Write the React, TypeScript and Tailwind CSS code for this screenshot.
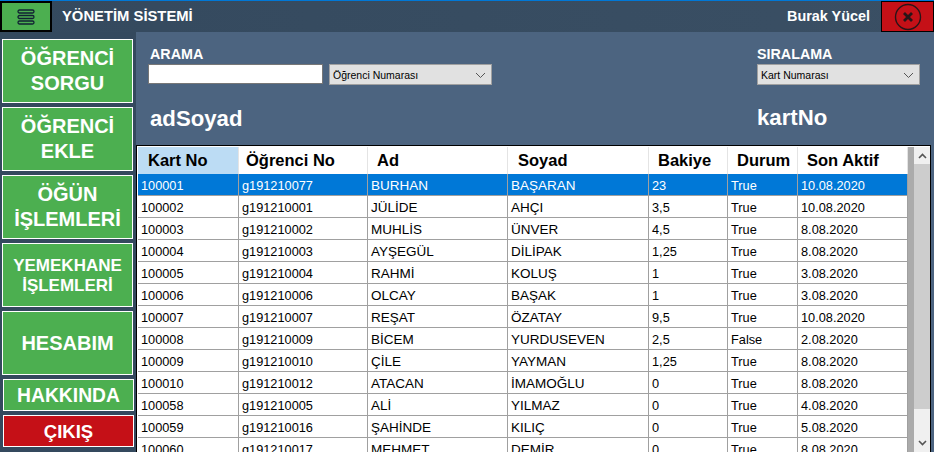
import React from "react";

const rows = [
  ["100001", "g191210077", "BURHAN", "BAŞARAN", "23", "True", "10.08.2020"],
  ["100002", "g191210001", "JÜLİDE", "AHÇI", "3,5", "True", "10.08.2020"],
  ["100003", "g191210002", "MUHLİS", "ÜNVER", "4,5", "True", "8.08.2020"],
  ["100004", "g191210003", "AYŞEGÜL", "DİLİPAK", "1,25", "True", "8.08.2020"],
  ["100005", "g191210004", "RAHMİ", "KOLUŞ", "1", "True", "3.08.2020"],
  ["100006", "g191210006", "OLCAY", "BAŞAK", "1", "True", "3.08.2020"],
  ["100007", "g191210007", "REŞAT", "ÖZATAY", "9,5", "True", "10.08.2020"],
  ["100008", "g191210009", "BİCEM", "YURDUSEVEN", "2,5", "False", "2.08.2020"],
  ["100009", "g191210010", "ÇİLE", "YAYMAN", "1,25", "True", "8.08.2020"],
  ["100010", "g191210012", "ATACAN", "İMAMOĞLU", "0", "True", "8.08.2020"],
  ["100058", "g191210005", "ALİ", "YILMAZ", "0", "True", "4.08.2020"],
  ["100059", "g191210016", "ŞAHİNDE", "KILIÇ", "0", "True", "5.08.2020"],
  ["100060", "g191210017", "MEHMET", "DEMİR", "0", "True", "8.08.2020"],
];

const heads = [
  ["Kart No", "pl-[10px] bg-[#bcdcf4]"],
  ["Öğrenci No", "pl-[7px]"],
  ["Ad", "pl-[9px]"],
  ["Soyad", "pl-[10px]"],
  ["Bakiye", "pl-[9px]"],
  ["Durum", "pl-[9px]"],
  ["Son Aktif", "pl-[9px]"],
];

const gridCols = "grid grid-cols-[101px_129px_140px_141px_79px_70px_110px]";

function SideButton({ children, className }: { children: React.ReactNode; className: string }) {
  return (
    <button className={`flex w-[131px] items-center justify-center border border-white text-center font-bold ${className}`}>
      <span className="text-white">{children}</span>
    </button>
  );
}

function Select({ label, className }: { label: string; className: string }) {
  return (
    <div className={`flex h-[21px] items-center justify-between border border-[#a0a0a0] bg-[#e1e1e1] pl-[3px] pr-[5px] pt-[2px] text-[10.5px] text-black ${className}`}>
      <span>{label}</span>
      <svg width="11" height="7" viewBox="0 0 11 7" fill="none" stroke="#555" strokeWidth="1">
        <path d="M1 1l4.5 4.5L10 1" />
      </svg>
    </div>
  );
}

export default function App() {
  return (
    <div className="flex h-[452px] w-[934px] flex-col overflow-hidden border-t border-[#0078d7] bg-[#34495e] font-['Liberation_Sans',Arial,sans-serif]">
      <header className="flex h-[31px] shrink-0 items-stretch bg-gradient-to-r from-[#34495e] to-[#3a4f64]">
        <button className="flex w-[52px] items-center justify-center border-2 border-black bg-[#4caf50]">
          <svg width="18" height="16" viewBox="0 0 18 16" fill="none" stroke="#123" strokeWidth="1.3">
            <rect x="1" y="1" width="16" height="3" rx="1.5" />
            <rect x="1" y="6.5" width="16" height="3" rx="1.5" />
            <rect x="1" y="12" width="16" height="3" rx="1.5" />
          </svg>
        </button>
        <div className="ml-[10px] flex flex-1 items-center text-[14.8px] font-bold text-white">YÖNETİM SİSTEMİ</div>
        <div className="mr-[11px] flex items-center text-[14.4px] font-bold text-white">Burak Yücel</div>
        <button className="flex w-[53px] items-center justify-center border border-black bg-[#c51017]">
          <svg width="28" height="28" viewBox="0 0 28 28" fill="none" stroke="#2a1518">
            <circle cx="14" cy="14" r="12.5" strokeWidth="1.4" />
            <path d="M10 10l8 8M18 10l-8 8" strokeWidth="2.8" />
          </svg>
        </button>
      </header>

      <div className="flex min-h-0 flex-1">
        <aside className="flex w-[136px] shrink-0 flex-col pl-[2px] pt-[7px] text-[20px] leading-[25px]">
          <SideButton className="mb-[4px] h-[64px] bg-[#4caf50]">ÖĞRENCİ<br />SORGU</SideButton>
          <SideButton className="mb-[4px] h-[64px] bg-[#4caf50]">ÖĞRENCİ<br />EKLE</SideButton>
          <SideButton className="mb-[4px] h-[64px] bg-[#4caf50]">ÖĞÜN<br />İŞLEMLERİ</SideButton>
          <SideButton className="mb-[4px] h-[64px] bg-[#4caf50] pt-px text-[17px] leading-[20px]">YEMEKHANE<br />İŞLEMLERİ</SideButton>
          <SideButton className="mb-[4px] h-[64px] bg-[#4caf50]">HESABIM</SideButton>
          <SideButton className="mb-[4px] ml-[1px] h-[32px] bg-[#4caf50] text-[19.3px]">HAKKINDA</SideButton>
          <SideButton className="ml-[1px] h-[32px] bg-[#c51017] text-[18.5px]">ÇIKIŞ</SideButton>
        </aside>

        <main className="flex min-w-0 flex-1 flex-col bg-[#4c6480]">
          <div className="flex h-[113px] shrink-0 pl-[12px] pt-[15px]">
            <div className="w-[609px]">
              <div className="ml-[2px] text-[14.3px] font-bold leading-[15px] text-white">ARAMA</div>
              <div className="mt-[2px] flex items-start">
                <div className="h-[20px] w-[175px] border border-[#777] bg-white" />
                <Select label="Öğrenci Numarası" className="ml-[6px] w-[163px]" />
              </div>
              <div className="ml-[2px] mt-[22px] text-[22.2px] font-bold leading-[24px] text-white">adSoyad</div>
            </div>
            <div>
              <div className="text-[14.3px] font-bold leading-[15px] text-white">SIRALAMA</div>
              <Select label="Kart Numarası" className="mt-[2px] w-[163px]" />
              <div className="mt-[21px] text-[22.2px] font-bold leading-[24px] text-white">kartNo</div>
            </div>
          </div>

          <div className="mr-[3px] flex min-h-0 flex-1 border-x border-t border-black bg-white pl-px pt-px">
            <div className="min-w-0 flex-1">
              <div className={`${gridCols} h-[27px] items-stretch text-[16.5px] font-bold text-black`}>
                {heads.map(([h, c]) => (
                  <div key={h} className={`flex items-center border-r border-[#e4e4e4] ${c}`}>{h}</div>
                ))}
              </div>
              {rows.map((r, i) => (
                <div
                  key={r[0]}
                  className={`${gridCols} h-[22px] border-b border-[#a0a0a0] leading-[23px] ${i === 0 ? "bg-[#0078d7] text-white" : "bg-white text-black"}`}
                >
                  {r.map((c, j) => (
                    <div key={j} className={`truncate border-r border-[#a0a0a0] pl-[3px] ${j === 2 || j === 3 ? "text-[13.5px]" : "text-[12.75px]"}`}>{c}</div>
                  ))}
                </div>
              ))}
            </div>
            <div className="flex w-[22px] shrink-0 bg-[#ababab] pl-[6px]">
              <div className="flex min-w-0 flex-1 flex-col bg-[#f0f0f0]">
                <div className="flex h-[17px] items-center justify-center">
                  <svg width="9" height="6" viewBox="0 0 9 6" fill="none" stroke="#555" strokeWidth="1.6"><path d="M1 5l3.5-3.5L8 5" /></svg>
                </div>
                <div className="h-[245px] bg-[#cdcdcd]" />
                <div className="flex flex-1 items-end justify-center pb-[6px]">
                  <svg width="9" height="6" viewBox="0 0 9 6" fill="none" stroke="#555" strokeWidth="1.6"><path d="M1 1l3.5 3.5L8 1" /></svg>
                </div>
              </div>
            </div>
          </div>
        </main>
      </div>
    </div>
  );
}
